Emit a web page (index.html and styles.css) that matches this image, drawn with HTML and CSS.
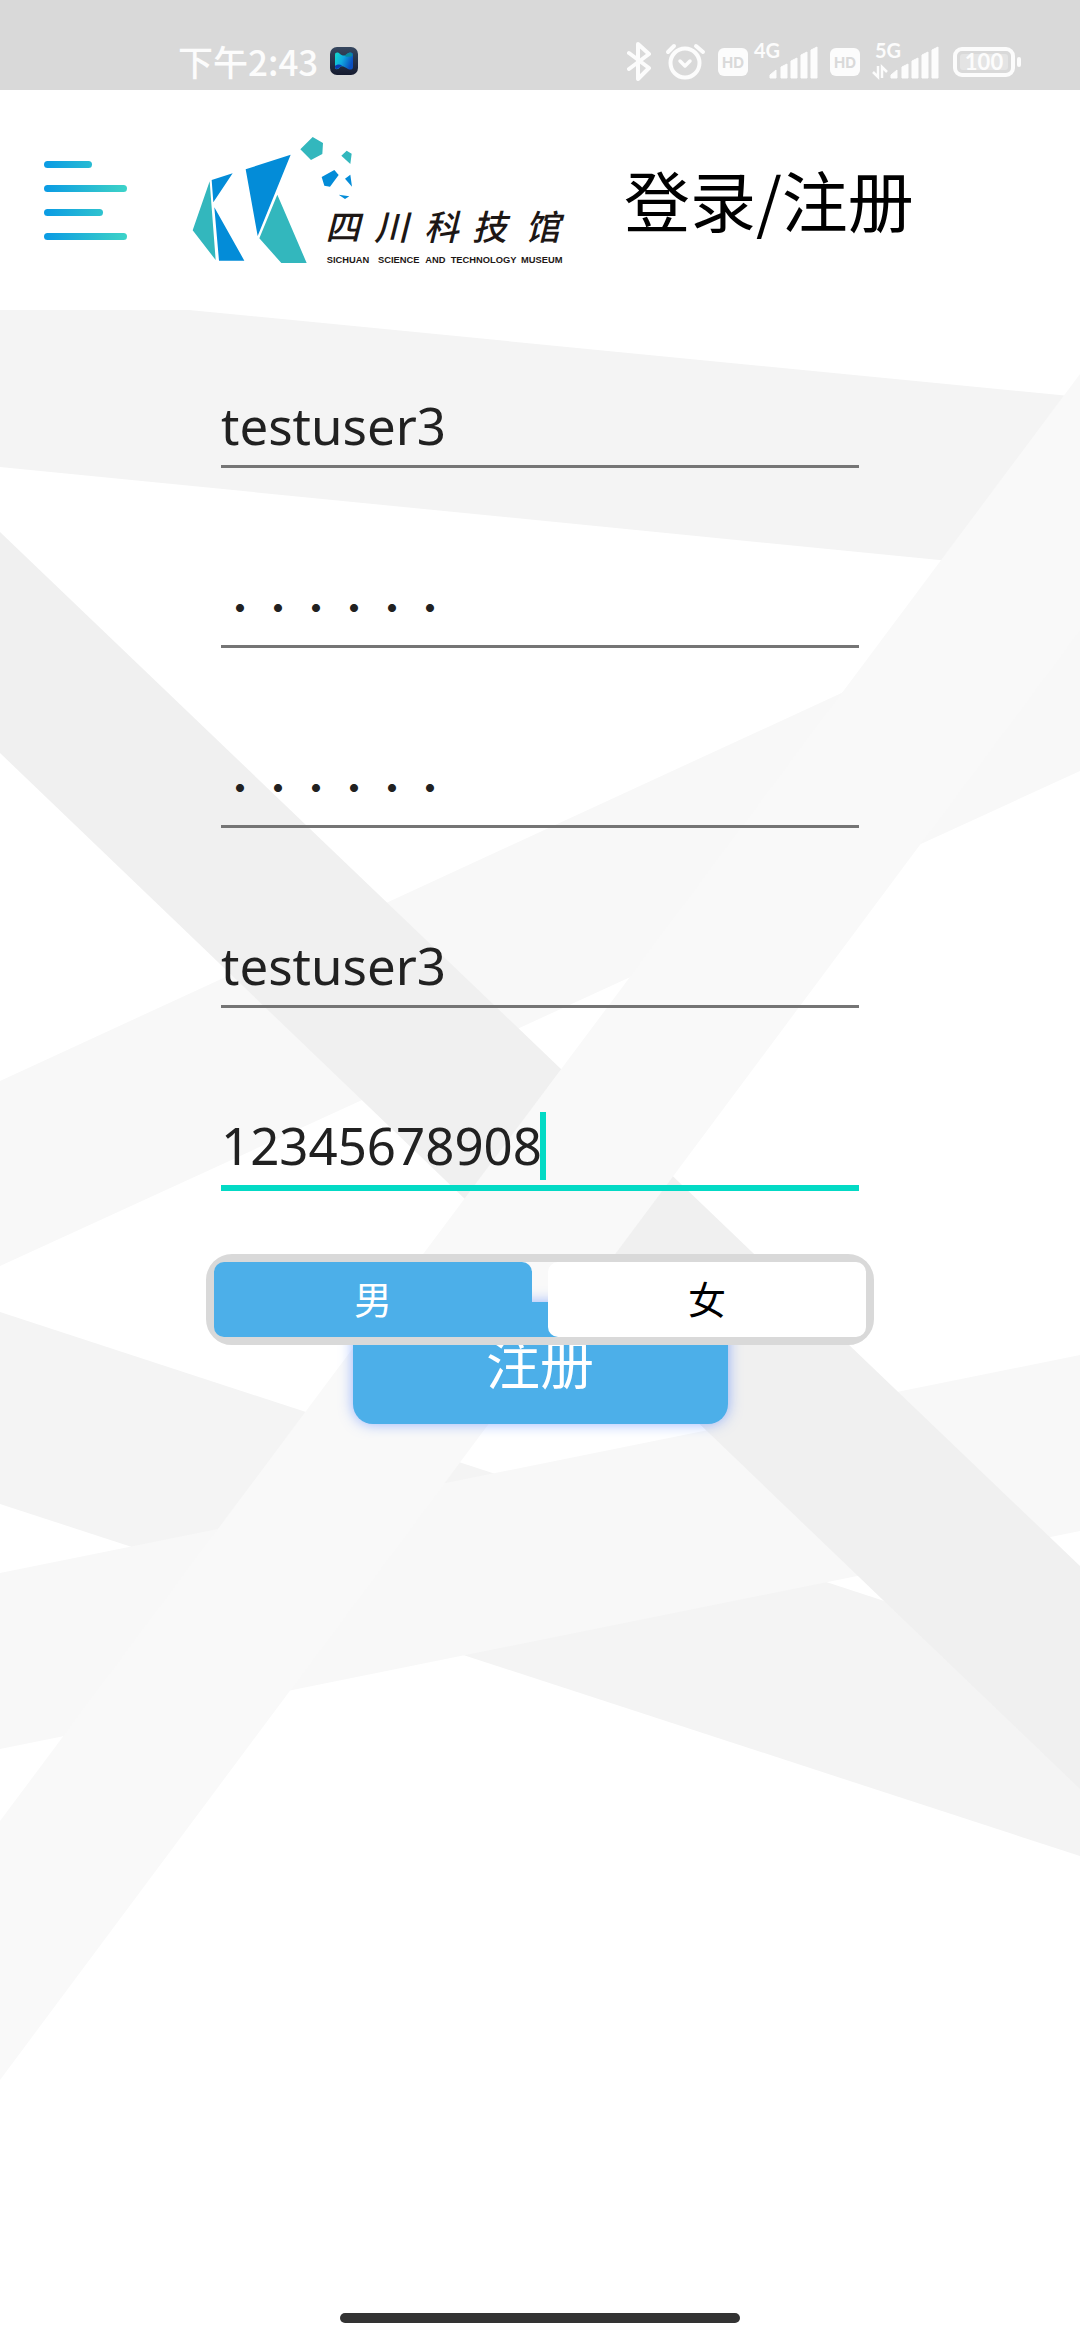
FILE: index.html
```html
<!DOCTYPE html>
<html lang="zh-CN">
<head>
<meta charset="utf-8">
<meta name="viewport" content="width=device-width, initial-scale=1">
<title>登录/注册</title>
<link rel="stylesheet" href="styles.css">
</head>
<body>
<div class="app">
  <div class="status">
    <div class="status-left">
      <span class="clock">下午2:43</span>
      <svg class="app-icon" width="28" height="28" viewBox="0 0 28 28" aria-hidden="true">
        <defs>
          <linearGradient id="tile" x1="0" y1="0" x2="0" y2="1"><stop offset="0" stop-color="#36475f"/><stop offset="1" stop-color="#161c30"/></linearGradient>
          <linearGradient id="wave" x1="0" y1="0" x2="1" y2="0.4"><stop offset="0" stop-color="#12dcc8"/><stop offset="0.5" stop-color="#10a8e0"/><stop offset="1" stop-color="#0b4fc0"/></linearGradient>
        </defs>
        <rect width="28" height="28" rx="7" fill="url(#tile)"/>
        <path d="M5 8C5 5 8 5 10 7C13 9 15 9 17 7C20 5 23 5 23 8V20C23 23 20 23 18 22C15 20 12 18 10 20C8 23 5 23 5 20Z" fill="url(#wave)"/>
        <path d="M14 8.500C16 8.500 18 5 21 6C23 7 23 9 21 9.500C18 10 16 10 14 8.500Z" fill="#0b8a9c"/>
        <path d="M5 19C7 17 10 17 12 18.500C10 20 8 22 6 22C5 21 5 20 5 19Z" fill="#0a3bb0"/>
      </svg>
    </div>
    <div class="status-right">
      <svg width="26" height="40" viewBox="0 0 26 40" aria-hidden="true"><path d="M2 12L22 27L11 38V3L22 13L2 28" fill="none" stroke="currentColor" stroke-width="4" stroke-linejoin="round" stroke-linecap="round"/></svg>
      <svg width="41" height="40" viewBox="0 0 41 40" fill="none" stroke="currentColor" stroke-linecap="round" aria-hidden="true"><circle cx="20" cy="22" r="14.500" stroke-width="4"/><path d="M15 20L20 25L25 20" stroke-width="3.500" stroke-linejoin="round"/><path d="M3 11L9 5M31 5L38 11" stroke-width="4"/></svg>
      <svg width="30" height="40" viewBox="0 0 30 40" aria-hidden="true"><rect y="7" width="30" height="28" rx="6" fill="currentColor"/><text class="hd" x="15" y="27" text-anchor="middle">HD</text></svg>
      <svg class="signal" width="58" height="40" viewBox="0 0 58 40" fill="currentColor" aria-hidden="true"><text class="net" x="-6" y="17">4G</text><path d="M10 37V34L16 29V37ZM21 37V26L27 23V37ZM31 37V20L37 17V37ZM41 37V14L47 11V37ZM51 37V9L57 6V37Z" stroke="currentColor" stroke-linejoin="round"/></svg>
      <svg width="30" height="40" viewBox="0 0 30 40" aria-hidden="true"><rect y="7" width="30" height="28" rx="6" fill="currentColor"/><text class="hd" x="15" y="27" text-anchor="middle">HD</text></svg>
      <svg class="signal" width="67" height="40" viewBox="0 0 67 40" fill="currentColor" aria-hidden="true"><text class="net" x="3" y="17">5G</text><path d="M19 37V34L25 29V37ZM30 37V26L36 23V37ZM40 37V20L46 17V37ZM50 37V14L56 11V37ZM60 37V9L66 6V37Z" stroke="currentColor" stroke-linejoin="round"/><path d="M1 31L6 36V25M10 37V26L15 31" fill="none" stroke="currentColor" stroke-width="2.500"/></svg>
      <svg width="70" height="40" viewBox="0 0 70 40" aria-hidden="true"><rect x="4" y="8" width="58" height="26" rx="7" fill="none" stroke="currentColor" stroke-width="4"/><rect x="9" y="13" width="48" height="16" rx="3" fill="#e4e4e4"/><rect x="66" y="16" width="4" height="10" rx="2" fill="currentColor"/><text class="charge" x="33" y="29" text-anchor="middle">100</text></svg>
    </div>
  </div>

  <header class="header">
    <button class="menu" type="button" aria-label="菜单">
      <svg width="83" height="80" viewBox="0 0 83 80" aria-hidden="true">
        <defs><linearGradient id="bar" gradientUnits="userSpaceOnUse" x1="0" y1="0" x2="83" y2="0"><stop offset="0" stop-color="#0a9be4"/><stop offset="0.800" stop-color="#34c8cc"/><stop offset="1" stop-color="#3dd3c9"/></linearGradient></defs>
        <g fill="url(#bar)"><rect y="1" width="48" height="7" rx="3.500"/><rect y="25" width="83" height="7" rx="3.500"/><rect y="49" width="59" height="7" rx="3.500"/><rect y="73" width="83" height="7" rx="3.500"/></g>
      </svg>
    </button>
    <svg class="logo" width="400" height="160" viewBox="0 0 1200 480" role="img" aria-label="四川科技馆">
      <g fill="#33b7bd">
        <path d="M89 184L107 420L38 331ZM292 224L380 429H304L238 355ZM398 51L429 69L427 102L393 120L361 88ZM500 92L515 101L511 132L484 107Z"/>
      </g>
      <g fill="#038cd8">
        <path d="M95 180L158 160L100 247ZM103 262L193 422H117ZM197 148L332 104L233 348ZM425 171L463 150L476 165L450 200L433 197ZM495 176L511 164L516 200ZM476 224L508 229L495 237Z"/>
      </g>
      <text class="logo-name" y="360" x="436 582 732 876 1036">四川科技馆</text>
      <text class="logo-sub" y="429"><tspan x="440">SICHUAN</tspan> <tspan x="594">SCIENCE</tspan> <tspan x="736">AND</tspan> <tspan x="812">TECHNOLOGY</tspan> <tspan x="1023">MUSEUM</tspan></text>
    </svg>
    <h1 class="title">登录/注册</h1>
  </header>

  <main class="main">
    <svg class="backdrop" viewBox="0 310 1080 2030" preserveAspectRatio="none" aria-hidden="true">
      <path fill="#f4f4f4" d="M0 310H189L1080 397V574L0 467Z"/>
      <path fill="#f4f4f4" d="M0 1312L1080 1665V1856L0 1504Z"/>
      <path fill="#f8f8f8" d="M0 1573L1080 1355V1531L0 1749Z"/>
      <path fill="#f8f8f8" d="M0 1081L1080 583V771L0 1266Z"/>
      <path fill="#f0f0f0" d="M0 532L1080 1566V1789L0 753Z"/>
      <path fill="#f9f9f9" d="M0 1821L1080 374V630L0 2080Z"/>
    </svg>
    <form class="form">
      <div class="fields">
        <input class="field" type="text" value="testuser3" aria-label="用户名">
        <input class="field secret" type="password" value="123456" aria-label="密码">
        <input class="field secret" type="password" value="123456" aria-label="确认密码">
        <input class="field" type="text" value="testuser3" aria-label="昵称">
        <div class="active">
          <input class="field" type="tel" value="12345678908" aria-label="手机号">
          <span class="caret"></span>
        </div>
      </div>
      <div class="segment" role="radiogroup" aria-label="性别">
        <label class="option"><input type="radio" name="sex" checked><span>男</span></label>
        <label class="option"><input type="radio" name="sex"><span>女</span></label>
      </div>
      <button class="submit" type="button">注册</button>
    </form>
    <div class="home-bar"></div>
  </main>
</div>
</body>
</html>
```
FILE: styles.css
```css
* { box-sizing: border-box; }

body {
  margin: 0;
  background: #fff;
  color: #000;
  font-family: "Noto Sans", "Noto Sans CJK SC", sans-serif;
}

.app {
  display: flex;
  flex-direction: column;
  min-height: 100vh;
}

svg { display: block; flex: none; }

/* Status bar */
.status {
  display: flex;
  justify-content: space-between;
  height: 90px;
  padding: 41px 59px 0 178px;
  background: #d9d9d9;
  color: #fcfcfc;
}

.status-left,
.status-right {
  display: flex;
  align-items: center;
  gap: 12px;
  height: 40px;
}

.clock {
  font: 500 35px/40px "Noto Sans CJK SC", sans-serif;
}

.signal { overflow: visible; }

.hd {
  fill: #d9d9d9;
  font: 700 15px Inter, sans-serif;
}

.net { font: 700 20px Lato, sans-serif; }

.charge {
  fill: #fcfcfc;
  font: 700 22px Lato, sans-serif;
}

/* Header */
.header {
  display: flex;
  align-items: center;
  height: 220px;
  padding-left: 44px;
  background: #fff;
}

.menu {
  margin: 0 53px 0 0;
  padding: 0;
  border: 0;
  background: none;
}

.logo-name {
  fill: #1d1715;
  font: italic 500 104px "Noto Sans CJK SC", sans-serif;
}

.logo-sub {
  fill: #1d1715;
  font: 700 28px "Liberation Sans", sans-serif;
}

.title {
  margin: 0 0 0 44px;
  padding-bottom: 4px;
  font: 400 66px/80px "Noto Sans CJK SC", sans-serif;
}

/* Registration form */
.main {
  position: relative;
  flex: 1;
  display: flex;
  flex-direction: column;
  padding: 78px 206px 17px;
}

.backdrop {
  position: absolute;
  inset: 0;
  width: 100%;
  height: 100%;
}

.form {
  position: relative;
  display: flex;
  flex-direction: column;
}

.fields {
  display: flex;
  flex-direction: column;
  gap: 100px;
  padding: 0 15px;
}

.field {
  display: block;
  width: 100%;
  height: 80px;
  padding: 0 0 3px;
  border: 0;
  border-bottom: 3px solid #757575;
  border-radius: 0;
  outline: 0;
  background: none;
  color: #212121;
  font: 400 51px/74px "Noto Sans", sans-serif;
}

.secret {
  font: 400 38px/74px "Noto Sans CJK SC", sans-serif;
}

.active { position: relative; }

.active .field {
  height: 83px;
  border-bottom: 6px solid #03dac5;
}

.caret {
  position: absolute;
  left: 319px;
  top: 4px;
  width: 6px;
  height: 68px;
  background: #03dac5;
}

.segment {
  position: relative;
  z-index: 1;
  display: flex;
  gap: 16px;
  margin-top: 63px;
  border: 8px solid #d9d9d9;
  border-radius: 26px;
}

.option {
  position: relative;
  flex: 1;
  height: 75px;
}

.option input {
  position: absolute;
  inset: 0;
  margin: 0;
  opacity: 0;
}

.option span {
  display: block;
  padding-bottom: 3px;
  border-radius: 10px;
  background: #fff;
  color: #000;
  font: 400 38px/72px "Noto Sans CJK SC", sans-serif;
  text-align: center;
}

.option input:checked + span {
  background: #4cafe9;
  color: #fff;
}

.submit {
  align-self: center;
  width: 375px;
  height: 122px;
  margin-top: -43px;
  padding: 0 0 2px;
  border: 0;
  border-radius: 20px;
  background: #4cafe9;
  box-shadow: 0 0 14px rgba(50, 110, 255, 0.5);
  color: #fff;
  font: 400 54px/120px "Noto Sans CJK SC", sans-serif;
}

.home-bar {
  position: relative;
  align-self: center;
  width: 400px;
  height: 10px;
  margin-top: auto;
  border-radius: 5px;
  background: #333;
}
```
